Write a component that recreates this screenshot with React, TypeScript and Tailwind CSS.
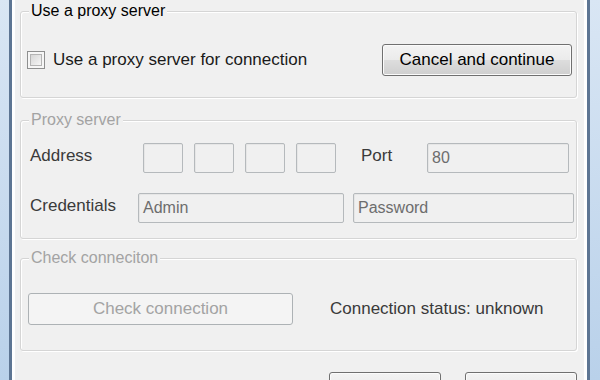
import React from "react";

const font = { fontFamily: '"Liberation Sans", Arial, sans-serif' };

function Group({
  label,
  disabled,
  className,
  children,
}: {
  label: string;
  disabled?: boolean;
  className?: string;
  children: React.ReactNode;
}) {
  return (
    <div
      className={
        "shrink-0 rounded-[3px] border border-[#d5d5d5] shadow-[1px_1px_0_#ffffff,inset_1px_1px_0_#ffffff] " +
        (className ?? "")
      }
    >
      <div
        className={
          "-mt-[10px] ml-[8px] w-fit bg-[#f0f0f0] px-[2px] text-[16px] leading-[18px] " +
          (disabled ? "text-[#a3a3a3]" : "text-black")
        }
      >
        {label}
      </div>
      {children}
    </div>
  );
}

function Field({ w, value, h = "h-[30px]" }: { w: string; value?: string; h?: string }) {
  return (
    <div
      className={
        "flex items-center rounded-[2px] border border-[#b5b9bc] bg-[#f0f0f0] pl-[4px] text-[16px] text-[#6d6d6d] shadow-[inset_1px_1px_0_#e6e6e6] " +
        w +
        " " +
        h
      }
    >
      {value}
    </div>
  );
}

const btn =
  "rounded-[3px] border border-[#707070] bg-[linear-gradient(to_bottom,#f3f3f3_0%,#ebebeb_50%,#dddddd_51%,#cfcfcf_100%)] shadow-[inset_0_0_0_1px_#fbfbfb]";

export default function App() {
  return (
    <div className="flex h-[380px] w-[600px] overflow-hidden bg-[#f0f0f0]" style={font}>
      <div className="w-[9px] shrink-0 bg-gradient-to-b from-[#d9e6f4] to-[#b9d1ea]" />
      <div className="w-[3px] shrink-0 bg-[#5d7593]" />
      <div className="flex min-w-0 flex-1 flex-col border-x-[3px] border-white bg-[#f0f0f0] pl-[5px] pr-[7px] pt-[11px]">
        {/* Group 1 */}
        <Group label="Use a proxy server" className="h-[87px]">
          <div className="mt-[24px] flex items-center pl-[6px] pr-[4px]">
            <div className="flex items-center">
              <div className="flex h-[18px] w-[18px] items-center justify-center border border-[#8e8f8f] bg-[#f6f6f6]">
                <div className="h-[12px] w-[12px] border border-[#b4b4b4] bg-gradient-to-br from-[#d6d6d6] to-[#f6f6f6]" />
              </div>
              <span className="ml-[8px] text-[17px] leading-[18px] text-[#1a1a1a]">
                Use a proxy server for connection
              </span>
            </div>
            <button className={"ml-auto flex h-[32px] w-[190px] items-center justify-center text-[17px] text-black " + btn}>
              Cancel and continue
            </button>
          </div>
        </Group>

        {/* Group 2 */}
        <Group label="Proxy server" disabled className="mt-[22px] h-[119px]">
          <div className="mt-[14px] flex items-center pl-[9px]">
            <span className="-mt-[5px] w-[113px] text-[17px] text-[#3a3a3a]">Address</span>
            <div className="flex gap-[11px]">
              <Field w="w-[40px]" />
              <Field w="w-[40px]" />
              <Field w="w-[40px]" />
              <Field w="w-[40px]" />
            </div>
            <span className="-mt-[5px] ml-[25px] w-[66px] text-[17px] text-[#3a3a3a]">Port</span>
            <Field w="w-[142px]" value="80" />
          </div>
          <div className="mt-[20px] flex items-center pl-[9px]">
            <span className="-mt-[5px] w-[108px] text-[17px] text-[#3a3a3a]">Credentials</span>
            <Field w="w-[206px]" value="Admin" />
            <div className="w-[9px]" />
            <Field w="w-[221px]" value="Password" />
          </div>
        </Group>

        {/* Group 3 */}
        <Group label="Check conneciton" disabled className="mt-[19px] h-[93px]">
          <div className="mt-[26px] flex items-center pl-[7px]">
            <button className="flex h-[32px] w-[265px] items-center justify-center rounded-[3px] border border-[#adb2b5] bg-[#f4f4f4] text-[17px] text-[#a3a3a3]">
              Check connection
            </button>
            <span className="ml-[37px] text-[17px] text-[#3a3a3a]">Connection status: unknown</span>
          </div>
        </Group>

        <div className="mt-[21px] flex shrink-0 justify-end gap-[24px]">
          <button className={"h-[32px] w-[112px] " + btn} />
          <button className={"h-[32px] w-[112px] " + btn} />
        </div>
      </div>
      <div className="w-[3px] shrink-0 bg-[#5d7593]" />
      <div className="w-[10px] shrink-0 bg-gradient-to-b from-[#d9e6f4] to-[#b9d1ea]" />
    </div>
  );
}
